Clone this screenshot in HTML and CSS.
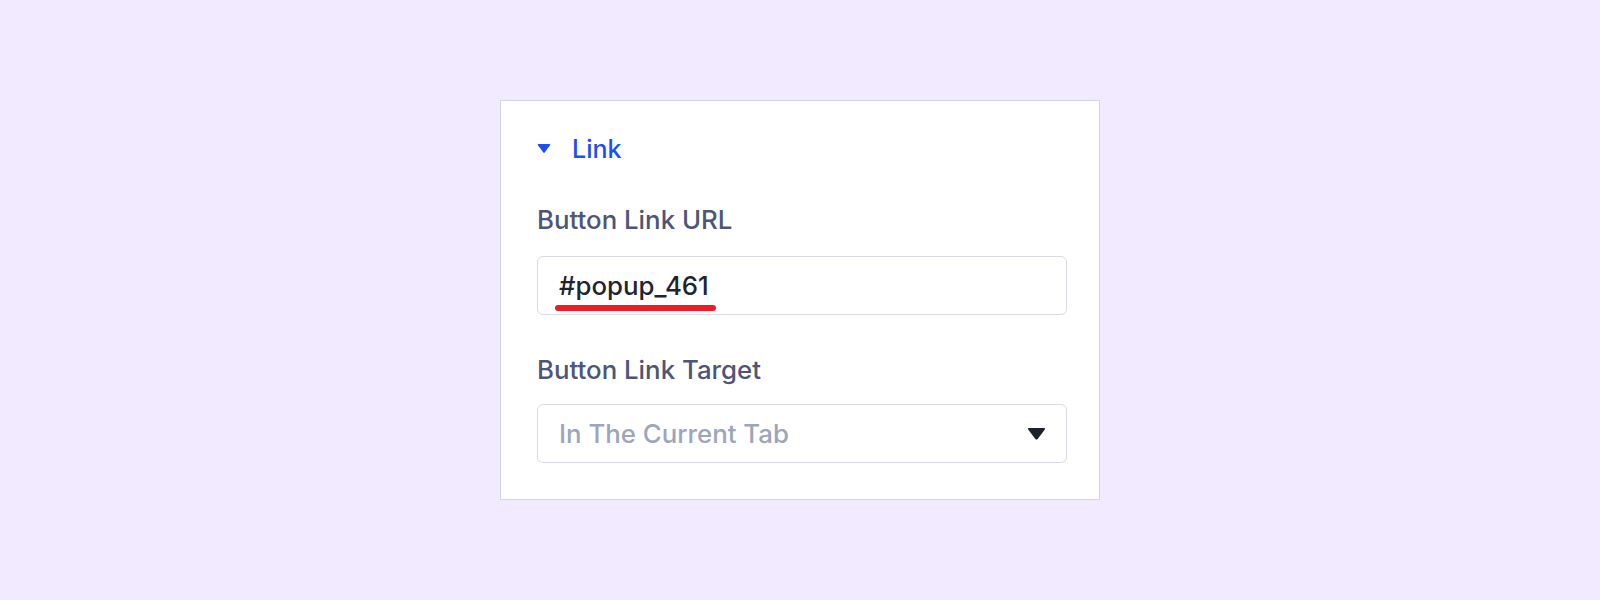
FILE: index.html
```html
<!DOCTYPE html>
<html lang="en">
<head>
<meta charset="utf-8">
<title>Link settings</title>
<link rel="stylesheet" href="styles.css">
</head>
<body>
<main class="stage">
  <section class="panel">
    <div class="panel-head">
      <svg class="caret" width="14" height="9" viewBox="0 0 14 9"><path d="M1 1.2 Q0.3 0 1.6 0 H12.4 Q13.7 0 13 1.2 L7.9 8.3 Q7 9.3 6.1 8.3 Z" fill="#1d4ef5"/></svg>
      <span class="panel-title">Link</span>
    </div>
    <div class="field">
      <label class="field-label">Button Link URL</label>
      <div class="input">
        <span class="input-value">#popup_461<span class="mark"></span></span>
      </div>
    </div>
    <div class="field field-second">
      <label class="field-label">Button Link Target</label>
      <div class="input select">
        <span class="placeholder">In The Current Tab</span>
        <svg class="select-arrow" width="19" height="12" viewBox="0 0 19 12"><path d="M1.2 1.5 Q0.4 0 2 0 H17 Q18.6 0 17.8 1.5 L10.7 10.9 Q9.5 12.3 8.3 10.9 Z" fill="#1c212b"/></svg>
      </div>
    </div>
  </section>
</main>
</body>
</html>
```

FILE: styles.css
```css
* { box-sizing: border-box; }
html, body { margin: 0; padding: 0; }
body {
  background: #f2eafe;
  font-family: Inter, "Noto Sans", sans-serif;
  width: 1600px;
  height: 600px;
  overflow: hidden;
}
.stage {
  padding-top: 100px;
  padding-left: 500px;
}
.panel {
  width: 600px;
  height: 400px;
  background: #ffffff;
  border: 1px solid #d3d6e4;
  padding: 33px 32px 0 36px;
}
.panel-head {
  display: flex;
  align-items: center;
  height: 30px;
}
.caret {
  display: block;
  margin-top: -1px;
}
.panel-title {
  margin-left: 21px;
  font-size: 25px;
  line-height: 30px;
  font-weight: 500;
  color: #1d4ef5;
}
.field {
  margin-top: 42px;
  display: flex;
  flex-direction: column;
}
.field-second {
  margin-top: 41px;
}
.field-label {
  font-size: 25.8px;
  line-height: 28px;
  color: #4d5578;
  font-weight: 500;
}
.input {
  margin-top: 22px;
  height: 59px;
  border: 1.5px solid #d8dbe6;
  border-radius: 6px;
  display: flex;
  align-items: center;
  padding: 0 20px 0 21px;
}
.field-second .input {
  margin-top: 20px;
}
.input-value {
  position: relative;
  font-size: 25.8px;
  line-height: 28px;
  font-weight: 500;
  color: #1f2431;
}
.mark {
  position: absolute;
  left: -4px;
  right: -7px;
  top: 33px;
  height: 6px;
  border-radius: 3px;
  background: #ec1c24;
}
.select {
  justify-content: space-between;
}
.placeholder {
  font-size: 25.8px;
  line-height: 28px;
  font-weight: 500;
  color: #9ca5ba;
}
.select-arrow {
  display: block;
}
```
